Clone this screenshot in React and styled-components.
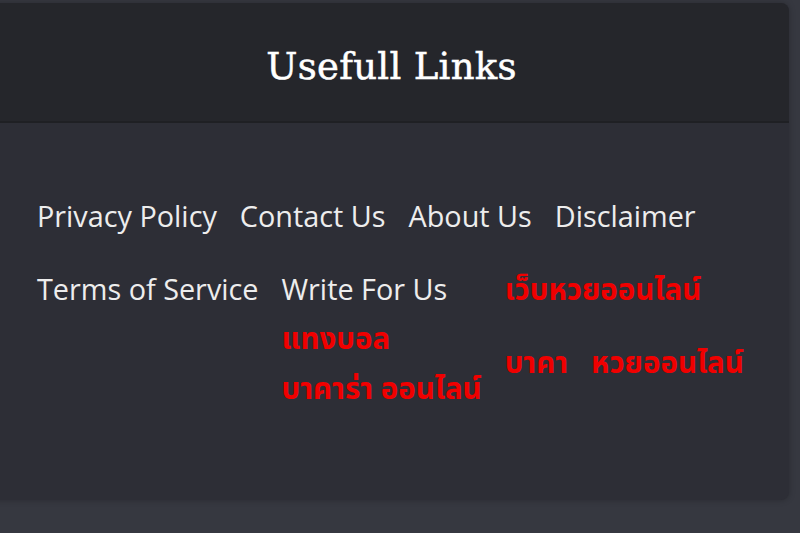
import React from "react";
import styled, { createGlobalStyle } from "styled-components";

const Global = createGlobalStyle`
  html, body { margin: 0; padding: 0; background: #363840; }
  body { width: 800px; height: 533px; overflow: hidden; }
`;

const Page = styled.div`
  padding: 3px 11px 0 0;
  height: 533px;
  box-sizing: border-box;
`;

const Card = styled.section`
  margin-left: -20px;
  height: 497px;
  border-radius: 8px;
  overflow: hidden;
  background: #2d2e36;
  box-shadow: 0 0 6px rgba(0, 0, 0, 0.25);
  display: flex;
  flex-direction: column;
`;

const Header = styled.header`
  height: 120px;
  background: #25262b;
  border-bottom: 2px solid #1f2024;
  display: flex;
  align-items: center;
  justify-content: center;
  padding-left: 14px;
  box-sizing: border-box;
`;

const Title = styled.h2`
  margin: 0;
  padding-top: 8px;
  font-family: "Roboto Slab", "DejaVu Serif", serif;
  font-weight: 400;
  font-size: 37px;
  color: #ffffff;
  letter-spacing: 0.3px;
  -webkit-text-stroke: 0.5px #ffffff;
`;

const Body = styled.div`
  padding: 72px 30px 0 57px;
`;

const List = styled.ul`
  list-style: none;
  margin: 0;
  padding: 0;
  display: flex;
  flex-wrap: wrap;
  align-items: flex-start;
  column-gap: 23px;
  row-gap: 31px;
`;

const Item = styled.li`
  display: flex;
  flex-direction: column;
  align-items: flex-start;
`;

const Link = styled.a`
  font-family: "Open Sans", "Noto Sans", sans-serif;
  font-size: 28.8px;
  line-height: 42px;
  color: #ededed;
  text-decoration: none;
  white-space: nowrap;
`;

const Promo = styled.a`
  font-family: "Noto Sans Thai", Tahoma, "DejaVu Sans", sans-serif;
  font-weight: 700;
  font-size: 29.5px;
  line-height: 40px;
  color: #f00000;
  text-decoration: none;
  white-space: pre;
  margin-top: ${(p) => p.$gap || 0}px;
`;

export default function App() {
  return (
    <>
      <Global />
      <Page>
        <Card>
          <Header>
            <Title>Usefull Links</Title>
          </Header>
          <Body>
            <List>
              <Item><Link href="#">Privacy Policy</Link></Item>
              <Item><Link href="#">Contact Us</Link></Item>
              <Item><Link href="#">About Us</Link></Item>
              <Item><Link href="#">Disclaimer</Link></Item>
              <Item><Link href="#">Terms of Service</Link></Item>
              <Item>
                <Link href="#">Write For Us</Link>
                <Promo href="#" $gap={10}>แทงบอล</Promo>
                <Promo href="#" $gap={10}>บาคาร่า ออนไลน์</Promo>
              </Item>
              <Item>
                <Promo href="#" $gap={3}>เว็บหวยออนไลน์</Promo>
                <Promo href="#" $gap={33}>{"บาคา   หวยออนไลน์"}</Promo>
              </Item>
            </List>
          </Body>
        </Card>
      </Page>
    </>
  );
}
